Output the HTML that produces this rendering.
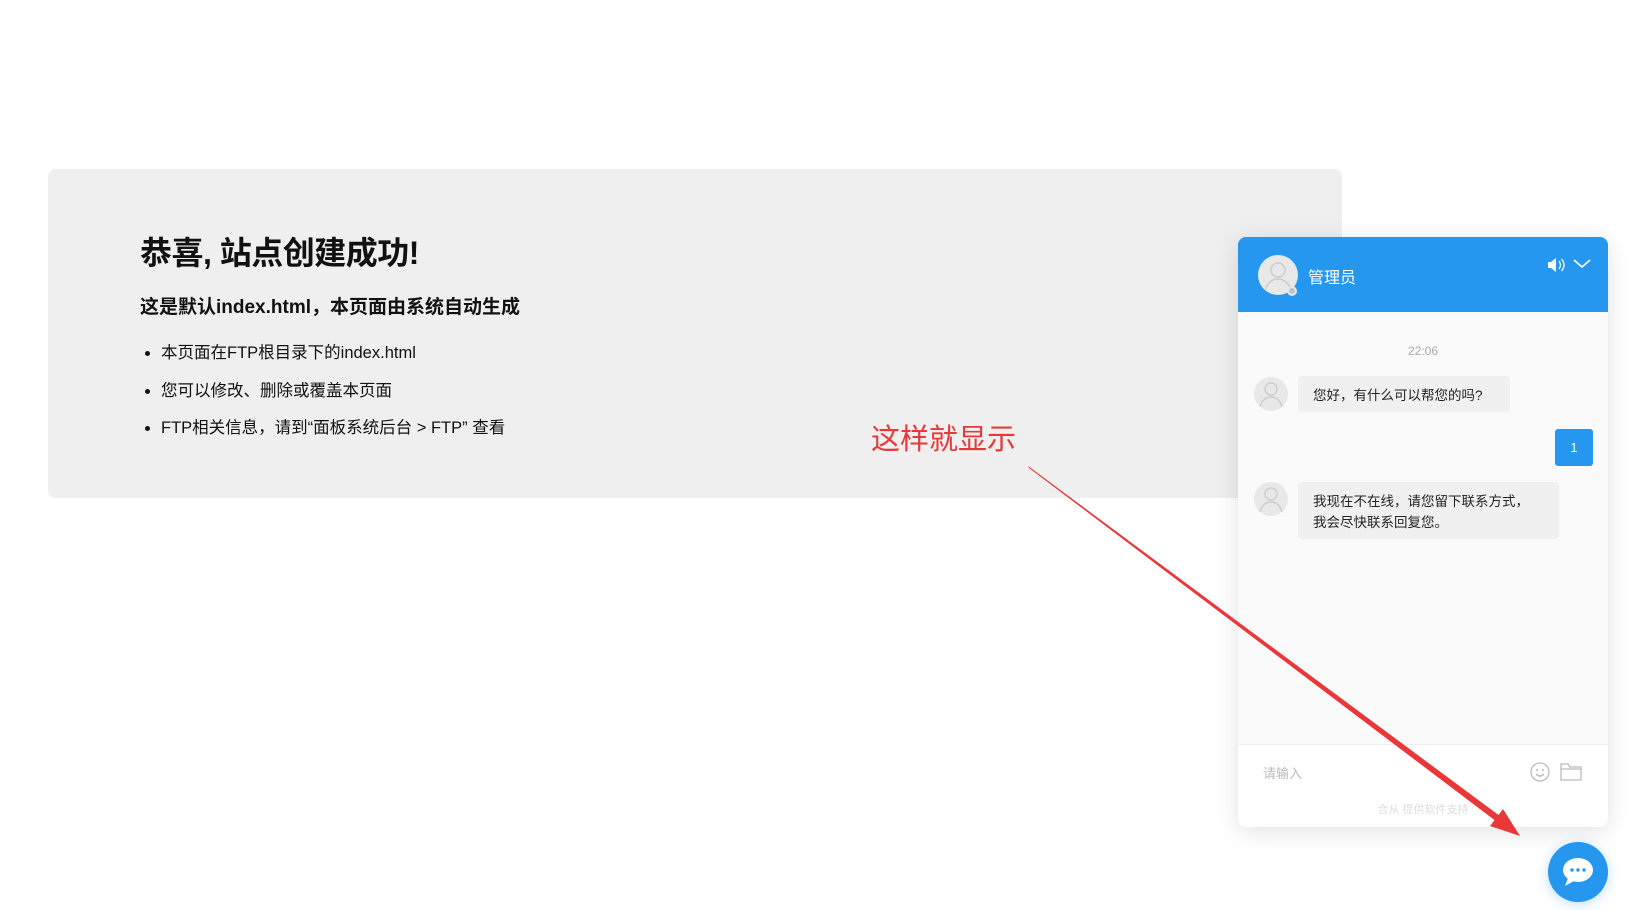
<!DOCTYPE html>
<html><head><meta charset="utf-8"><style>
*{margin:0;padding:0;box-sizing:border-box}
body{width:1628px;height:910px;background:#fff;position:relative;overflow:hidden;font-family:"Liberation Sans","Noto Sans CJK SC",sans-serif;color:#111}
.card{position:absolute;left:48px;top:169px;width:1294px;height:329px;background:#efefef;border-radius:8px}
h1{position:absolute;left:140px;top:228px;font-size:32px;font-weight:bold;letter-spacing:-0.5px}
h2{position:absolute;left:140px;top:292px;font-size:19px;font-weight:bold}
ul{position:absolute;left:161px;top:341px;list-style:disc;font-size:16.5px}
ul li{height:37.5px;line-height:24px}
.red{position:absolute;left:871px;top:416px;font-size:29px;color:#e8383a}
.panel{position:absolute;left:1238px;top:237px;width:370px;height:590px;background:#fafafa;border-radius:8px;box-shadow:0 4px 24px rgba(0,0,0,.12);overflow:hidden}
.hd{height:75px;background:#2597ee;position:relative}
.av{position:absolute;border-radius:50%;background:#e8e8e8;overflow:hidden}
.tx{position:absolute;font-size:13.5px;color:#222}
.bub{position:absolute;background:#f0f0f0;border-radius:4px}
</style></head><body>
<div class="card"></div>
<h1>恭喜, 站点创建成功!</h1>
<h2>这是默认index.html，本页面由系统自动生成</h2>
<ul><li>本页面在FTP根目录下的index.html</li><li>您可以修改、删除或覆盖本页面</li><li>FTP相关信息，请到“面板系统后台 &gt; FTP” 查看</li></ul>
<div class="red">这样就显示</div>
<div class="panel">
 <div class="hd">
  <div class="av" style="left:20px;top:18px;width:40px;height:40px">
   <svg width="40" height="40"><circle cx="20" cy="15" r="7" fill="none" stroke="#ccc" stroke-width="1.5"/><path d="M7 36c2-9 8-12 13-12s11 3 13 12" fill="none" stroke="#ccc" stroke-width="1.5"/></svg>
  </div>
  <div style="position:absolute;left:49px;top:49px;width:10px;height:10px;border-radius:50%;background:#b9c6d2;border:2px solid #e8e8e8"></div>
  <div style="position:absolute;left:70px;top:27px;color:#fff;font-size:16px">管理员</div>
  <svg style="position:absolute;left:308px;top:20px" width="20" height="16"><path d="M2 5h3l5-4v14l-5-4H2z" fill="#fff"/><path d="M13 4q3 4 0 8M15.5 2q5 6 0 12" stroke="#fff" fill="none" stroke-width="1.3"/></svg>
  <svg style="position:absolute;left:335px;top:21px" width="18" height="12"><path d="M1 2l8 7 8-7" stroke="#fff" fill="none" stroke-width="1.6"/></svg>
 </div>
 <div style="position:absolute;left:0;width:100%;top:107px;text-align:center;font-size:12px;color:#aaa">22:06</div>
 <div class="av" style="left:16px;top:140px;width:34px;height:34px"><svg width="34" height="34"><circle cx="17" cy="12" r="6" fill="none" stroke="#ccc" stroke-width="1.4"/><path d="M6 30c2-7 6-10 11-10s9 3 11 10" fill="none" stroke="#ccc" stroke-width="1.4"/></svg></div>
 <div class="bub" style="left:60px;top:139px;width:212px;height:36px"></div>
 <div class="tx" style="left:75px;top:147px">您好，有什么可以帮您的吗?</div>
 <div style="position:absolute;left:317px;top:192px;width:38px;height:37px;background:#2597ee;border-radius:3px;color:#fff;font-size:13px;text-align:center;line-height:37px">1</div>
 <div class="av" style="left:16px;top:245px;width:34px;height:34px"><svg width="34" height="34"><circle cx="17" cy="12" r="6" fill="none" stroke="#ccc" stroke-width="1.4"/><path d="M6 30c2-7 6-10 11-10s9 3 11 10" fill="none" stroke="#ccc" stroke-width="1.4"/></svg></div>
 <div class="bub" style="left:60px;top:245px;width:261px;height:57px"></div>
 <div class="tx" style="left:75px;top:254px;line-height:21px">我现在不在线，请您留下联系方式，<br>我会尽快联系回复您。</div>
 <div style="position:absolute;left:0;top:507px;width:100%;height:83px;background:#fff;border-top:1px solid #eee"></div>
 <div style="position:absolute;left:25px;top:526px;font-size:13px;color:#bbb">请输入</div>
 <svg style="position:absolute;left:291px;top:524px" width="22" height="22"><circle cx="11" cy="11" r="9" fill="none" stroke="#bbb" stroke-width="1.3"/><circle cx="8" cy="9" r="1" fill="#bbb"/><circle cx="14" cy="9" r="1" fill="#bbb"/><path d="M7 13q4 4 8 0" stroke="#bbb" fill="none" stroke-width="1.3"/></svg>
 <svg style="position:absolute;left:322px;top:524px" width="22" height="20"><path d="M1 3h7l2 3h11v13H1z M1 8h20" fill="none" stroke="#bbb" stroke-width="1.3"/></svg>
 <div style="position:absolute;left:0;width:100%;top:564px;text-align:center;font-size:11px;color:#ddd">合从 提供软件支持</div>
</div>
<svg style="position:absolute;left:0;top:0" width="1628" height="910"><polygon points="1028,466 1029,468 1505,828 1508,822" fill="#e8383a"/><polygon points="1520,836 1490,826 1503,809" fill="#e8383a"/></svg>
<div style="position:absolute;left:1548px;top:842px;width:60px;height:60px;border-radius:50%;background:#2597ee;box-shadow:0 2px 12px rgba(37,151,238,.3)">
 <svg width="60" height="60"><ellipse cx="30" cy="28" rx="15" ry="12" fill="#fff"/><path d="M20 36l-3 8 9-5z" fill="#fff"/><circle cx="24" cy="28" r="1.7" fill="#2597ee"/><circle cx="30" cy="28" r="1.7" fill="#2597ee"/><circle cx="36" cy="28" r="1.7" fill="#2597ee"/></svg>
</div>
</body></html>
